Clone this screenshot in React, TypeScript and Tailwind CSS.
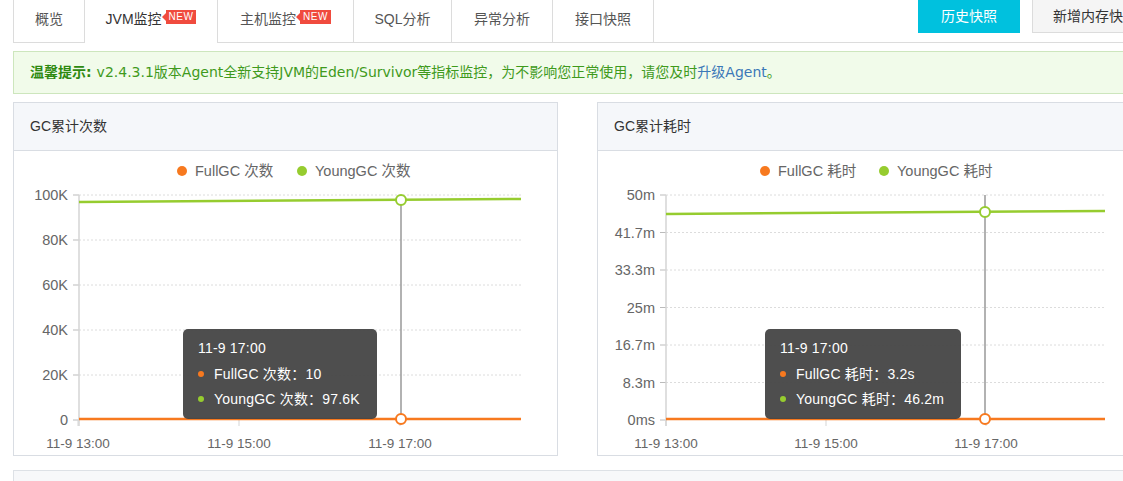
import React from "react";

const FONT = '"Liberation Sans", "Noto Sans CJK SC", sans-serif';
const GREEN = "#96cc2f";
const ORANGE = "#f7791f";

type ChartProps = {
  axisX: number;
  labels: string[];
  legend: [string, string];
  legendX: [number, number];
  xLabels: { x: number; t: string }[];
  greenY: [number, number];
  greenPt: number;
  tipLeft: number;
  tipW: number;
  tip: [string, string];
};

function Chart(p: ChartProps) {
  const top = 44;
  const bottom = 269;
  const right = 507;
  const n = p.labels.length - 1;
  const step = (bottom - top) / n;
  const cx = 387;
  return (
    <div className="relative h-[304px]">
      <svg width="545" height="304" className="block" style={{ fontFamily: FONT }}>
        {/* legend */}
        <circle cx={p.legendX[0]} cy={20} r={5} fill={ORANGE} />
        <text x={p.legendX[0] + 13} y={25} fontSize="14.5" fill="#666">{p.legend[0]}</text>
        <circle cx={p.legendX[1]} cy={20} r={5} fill={GREEN} />
        <text x={p.legendX[1] + 13} y={25} fontSize="14.5" fill="#666">{p.legend[1]}</text>
        {/* grid + y labels */}
        {p.labels.map((l, i) => {
          const y = top + i * step;
          return (
            <g key={i}>
              {i < n && (
                <line x1={p.axisX} x2={right} y1={y} y2={y} stroke="#dcdcdc" strokeDasharray="2 2" />
              )}
              <line x1={p.axisX - 6} x2={p.axisX} y1={y} y2={y} stroke="#bbb" />
              <text x={p.axisX - 11} y={y + 5} fontSize="14.5" fill="#666" textAnchor="end">{l}</text>
            </g>
          );
        })}
        {/* y axis */}
        <line x1={p.axisX} x2={p.axisX} y1={top} y2={bottom + 6} stroke="#d5d5d5" strokeWidth="1.5" />
        {/* x ticks */}
        {p.xLabels.map((xl, i) => (
          <g key={i}>
            <line x1={xl.x} x2={xl.x} y1={bottom} y2={bottom + 6} stroke="#d5d5d5" />
            <text x={xl.x} y={297} fontSize="13.5" fill="#666" textAnchor="middle">{xl.t}</text>
          </g>
        ))}
        {/* crosshair */}
        <line x1={cx} x2={cx} y1={top} y2={bottom} stroke="#999" strokeWidth="1.5" />
        {/* series */}
        <line x1={p.axisX} x2={right} y1={p.greenY[0]} y2={p.greenY[1]} stroke={GREEN} strokeWidth="2.5" />
        <line x1={p.axisX} x2={right} y1={bottom - 1} y2={bottom - 1} stroke={ORANGE} strokeWidth="2.5" />
        <circle cx={cx} cy={p.greenPt} r={5} fill="#fff" stroke={GREEN} strokeWidth="2" />
        <circle cx={cx} cy={bottom - 1} r={5} fill="#fff" stroke={ORANGE} strokeWidth="2" />
      </svg>
      <div
        className="absolute top-[178px] h-[90px] rounded-[5px] bg-[#454545]/95 text-white text-[14px] pl-[15px] pt-[9px] leading-[20px] tracking-[0.2px]"
        style={{ left: p.tipLeft, width: p.tipW, fontFamily: FONT }}
      >
        <div>11-9 17:00</div>
        <div className="mt-[6px] flex items-center">
          <span className="w-[6px] h-[6px] rounded-full bg-[#f7791f] mr-[10px]" />
          {p.tip[0]}
        </div>
        <div className="mt-[5px] flex items-center">
          <span className="w-[6px] h-[6px] rounded-full bg-[#96cc2f] mr-[10px]" />
          {p.tip[1]}
        </div>
      </div>
    </div>
  );
}

function Card({ title, children }: { title: string; children: React.ReactNode }) {
  return (
    <div className="w-[545px] h-[354px] border border-[#d9dde3] bg-white shrink-0">
      <div className="h-[48px] bg-[#f5f7fa] border-b border-[#d9dde3] flex items-center pl-[16px] text-[14px] text-[#333]">
        {title}
      </div>
      {children}
    </div>
  );
}

const tabs = [
  { t: "概览", w: "w-[72px]" },
  { t: "JVM监控", n: true, a: true, w: "w-[133px]" },
  { t: "主机监控", n: true, w: "w-[136px]" },
  { t: "SQL分析", w: "w-[98px]" },
  { t: "异常分析", w: "w-[101px]" },
  { t: "接口快照", w: "w-[101px]" },
];

export default function App() {
  return (
    <div
      className="w-[1123px] h-[481px] overflow-hidden bg-white"
      style={{ fontFamily: FONT }}
    >
      <div className="w-[1170px] pl-[13px]">
        {/* tabs */}
        <div className="flex h-[43px]">
          {tabs.map((tb, i) => (
            <div
              key={i}
              className={
                "h-[43px] pt-[9px] text-[14px] leading-[20px] border-r border-[#dcdcdc] flex items-start justify-center shrink-0 " +
                tb.w +
                " " +
                (i === 0 ? "border-l " : "") +
                (tb.a ? "text-[#333] bg-white" : "text-[#555] border-b bg-white")
              }
            >
              <span>{tb.t}</span>
              {tb.n && (
                <span className="relative ml-[4px] mt-[1px] h-[14px] px-[3px] bg-[#f04b3e] text-white text-[10px] leading-[14px] tracking-[0.5px]">
                  <span className="absolute left-[-4px] top-[3px] w-0 h-0 border-y-[4px] border-y-transparent border-r-[4px] border-r-[#f04b3e]" />
                  NEW
                </span>
              )}
            </div>
          ))}
          <div className="flex-1 border-b border-[#dcdcdc] flex items-start pl-[264px]">
            <div className="h-[33px] w-[102px] bg-[#00c1de] text-white text-[14px] flex items-center justify-center">
              历史快照
            </div>
            <div className="ml-[12px] h-[33px] px-[20px] bg-[#f5f5f5] border border-[#dcdcdc] border-t-0 text-[14px] text-[#333] flex items-center">
              新增内存快照
            </div>
          </div>
        </div>
        {/* notice */}
        <div
          className="mt-[8px] h-[43px] border border-[#cde6bd] bg-[#f1fbea] flex items-center pl-[16px] text-[14px] text-[#3f9a1c]"
          style={{ fontFamily: '"DejaVu Sans", "Noto Sans CJK SC", sans-serif' }}
        >
          <span className="font-bold text-[#2e8a10]">温馨提示:</span>
          <span className="ml-[5px]">
            v2.4.3.1版本Agent全新支持JVM的Eden/Survivor等指标监控，为不影响您正常使用，请您及时
            <span className="text-[#3b78b8]">升级Agent</span>。
          </span>
        </div>
        {/* cards */}
        <div className="mt-[8px] flex gap-[39px]">
          <Card title="GC累计次数">
            <Chart
              axisX={65}
              labels={["100K", "80K", "60K", "40K", "20K", "0"]}
              legend={["FullGC 次数", "YoungGC 次数"]}
              legendX={[168, 288]}
              xLabels={[
                { x: 64, t: "11-9 13:00" },
                { x: 225, t: "11-9 15:00" },
                { x: 386, t: "11-9 17:00" },
              ]}
              greenY={[51, 48]}
              greenPt={49}
              tipLeft={169}
              tipW={194}
              tip={["FullGC 次数：10", "YoungGC 次数：97.6K"]}
            />
          </Card>
          <Card title="GC累计耗时">
            <Chart
              axisX={68}
              labels={["50m", "41.7m", "33.3m", "25m", "16.7m", "8.3m", "0ms"]}
              legend={["FullGC 耗时", "YoungGC 耗时"]}
              legendX={[167, 286]}
              xLabels={[
                { x: 68, t: "11-9 13:00" },
                { x: 228, t: "11-9 15:00" },
                { x: 388, t: "11-9 17:00" },
              ]}
              greenY={[63, 60]}
              greenPt={61}
              tipLeft={167}
              tipW={196}
              tip={["FullGC 耗时：3.2s", "YoungGC 耗时：46.2m"]}
            />
          </Card>
        </div>
        <div className="mt-[14px] h-[60px] border border-[#dde1e6] bg-[#f7f8fa]" />
      </div>
    </div>
  );
}
